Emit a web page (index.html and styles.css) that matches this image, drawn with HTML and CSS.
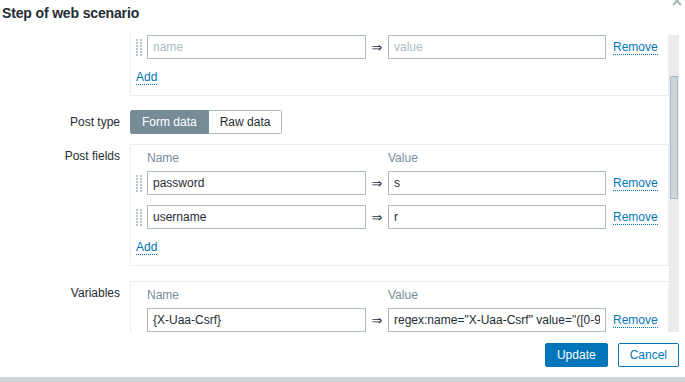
FILE: index.html
```html
<!DOCTYPE html>
<html lang="en">
<head>
  <meta charset="UTF-8">
  <meta name="viewport" content="width=device-width, initial-scale=1.0">
  <title>Step of web scenario</title>
  <link rel="stylesheet" href="styles.css">
</head>
<body>
  <div class="dialog">
    <div class="dialog-head">
      <h4 class="dialog-title">Step of web scenario</h4>
      <button class="btn-close" title="Close">
        <svg width="10" height="10" viewBox="0 0 10 10"><path d="M1 1L9 9M9 1L1 9" stroke="#a9b5bb" stroke-width="2"/></svg>
      </button>
    </div>

    <div class="dialog-body">
      <div class="form">
        <div class="form-row row-cut">
          <div class="form-label"></div>
          <div class="pairs pairs-cut">
            <div class="pair">
              <span class="drag"><svg width="6" height="17"><use href="#dots"/></svg></span>
              <input class="text" type="text" placeholder="name">
              <span class="arrow">&rArr;</span>
              <input class="text" type="text" placeholder="value">
              <span class="pair-remove"><a class="link" href="#">Remove</a></span>
            </div>
            <div class="pair-add"><a class="link" href="#">Add</a></div>
          </div>
        </div>

        <div class="form-row row-type">
          <div class="form-label label-mid">Post type</div>
          <div class="segmented">
            <button class="seg seg-on">Form data</button>
            <button class="seg">Raw data</button>
          </div>
        </div>

        <div class="form-row row-fields">
          <div class="form-label">Post fields</div>
          <div class="pairs">
            <div class="pair pair-head">
              <span></span>
              <span>Name</span>
              <span></span>
              <span>Value</span>
              <span></span>
            </div>
            <div class="pair">
              <span class="drag"><svg width="6" height="17"><use href="#dots"/></svg></span>
              <input class="text" type="text" value="password">
              <span class="arrow">&rArr;</span>
              <input class="text" type="text" value="s">
              <span class="pair-remove"><a class="link" href="#">Remove</a></span>
            </div>
            <div class="pair">
              <span class="drag"><svg width="6" height="17"><use href="#dots"/></svg></span>
              <input class="text" type="text" value="username">
              <span class="arrow">&rArr;</span>
              <input class="text" type="text" value="r">
              <span class="pair-remove"><a class="link" href="#">Remove</a></span>
            </div>
            <div class="pair-add"><a class="link" href="#">Add</a></div>
          </div>
        </div>

        <div class="form-row">
          <div class="form-label">Variables</div>
          <div class="pairs">
            <div class="pair pair-head">
              <span></span>
              <span>Name</span>
              <span></span>
              <span>Value</span>
              <span></span>
            </div>
            <div class="pair">
              <span></span>
              <input class="text" type="text" value="{X-Uaa-Csrf}">
              <span class="arrow">&rArr;</span>
              <input class="text" type="text" value="regex:name=&quot;X-Uaa-Csrf&quot; value=&quot;([0-9a-zA-Z-]+)&quot;">
              <span class="pair-remove"><a class="link" href="#">Remove</a></span>
            </div>
          </div>
        </div>
      </div>

      <div class="scrollbar"><div class="scroll-thumb"></div></div>
    </div>

    <div class="dialog-foot">
      <button class="btn btn-main">Update</button>
      <button class="btn btn-alt">Cancel</button>
    </div>
  </div>
  <div class="page-edge"></div>

  <svg width="0" height="0" class="defs">
    <defs>
      <g id="dots" fill="#b9c4ca">
        <rect x="0" y="0" width="2" height="2"/><rect x="4" y="0" width="2" height="2"/>
        <rect x="0" y="3" width="2" height="2"/><rect x="4" y="3" width="2" height="2"/>
        <rect x="0" y="6" width="2" height="2"/><rect x="4" y="6" width="2" height="2"/>
        <rect x="0" y="9" width="2" height="2"/><rect x="4" y="9" width="2" height="2"/>
        <rect x="0" y="12" width="2" height="2"/><rect x="4" y="12" width="2" height="2"/>
        <rect x="0" y="15" width="2" height="2"/><rect x="4" y="15" width="2" height="2"/>
      </g>
    </defs>
  </svg>
</body>
</html>
```

FILE: styles.css
```css
body {
  margin: 0;
  font-family: "Liberation Sans", Arial, sans-serif;
  font-size: 12px;
  color: #1f2c33;
  background-color: #fff;
}
.defs {
  position: absolute;
}
.dialog {
  height: 377px;
  display: flex;
  flex-direction: column;
}
.dialog-head {
  position: relative;
  height: 34px;
  padding-left: 2px;
}
.dialog-title {
  margin: 0;
  font-size: 14px;
  font-weight: bold;
  line-height: 26px;
  letter-spacing: -0.15px;
}
.btn-close {
  position: absolute;
  top: -4px;
  right: 3px;
  padding: 0;
  border: 0;
  background: none;
  line-height: 0;
}
.dialog-body {
  height: 299px;
  display: flex;
}
.form {
  width: 669px;
  overflow: hidden;
}
.form-row {
  display: grid;
  grid-template-columns: 130px 539px;
  margin-bottom: 15px;
}
.row-cut {
  margin-bottom: 14px;
}
.row-type {
  margin-bottom: 10px;
}
.form-label {
  padding: 5px 10px 0 0;
  text-align: right;
  line-height: 14px;
}
.label-mid {
  padding-top: 0;
  line-height: 24px;
}
.pairs {
  border: 1px solid #ebeef0;
  padding: 6px 0 11px 5px;
}
.pairs-cut {
  border-top: 0;
  padding-top: 1px;
}
.pair {
  display: grid;
  grid-template-columns: 11px 219px 22px 218px auto;
  align-items: center;
  margin-bottom: 10px;
}
.pair:last-child {
  margin-bottom: 0;
}
.pair-head {
  line-height: 14px;
  color: #768d99;
  margin-bottom: 6px;
}
.drag {
  line-height: 0;
}
.text {
  box-sizing: border-box;
  width: 100%;
  height: 24px;
  margin: 0;
  padding: 0 5px;
  border: 1px solid #acbbc2;
  font-family: "Liberation Sans", Arial, sans-serif;
  font-size: 12px;
  color: #1f2c33;
  background-color: #fff;
}
.text::placeholder {
  color: #acbbc2;
}
.arrow {
  text-align: center;
  font-family: "DejaVu Sans", sans-serif;
  font-size: 13px;
}
.pair-remove {
  padding-left: 7px;
}
.link {
  color: #0275b8;
  text-decoration: none;
  border-bottom: 1px dotted #0275b8;
}
.pair-add {
  margin-top: 11px;
  line-height: 14px;
}
.segmented {
  display: flex;
}
.seg {
  height: 24px;
  padding: 0 11px;
  margin: 0;
  border: 1px solid #acbbc2;
  background-color: #fff;
  color: #1f2c33;
  font-family: "Liberation Sans", Arial, sans-serif;
  font-size: 12px;
}
.seg-on {
  background-color: #768d99;
  border-color: #768d99;
  color: #fff;
  border-radius: 2px 0 0 2px;
}
.seg + .seg {
  border-left: 0;
  border-radius: 0 2px 2px 0;
}
.scrollbar {
  width: 10px;
  height: 297px;
  margin-top: 1px;
  background-color: #ebebeb;
}
.scroll-thumb {
  box-sizing: border-box;
  width: 8px;
  height: 123px;
  margin: 41px 0 0 1px;
  background-color: #ccd5d9;
  border: 1px solid #acbbc2;
}
.dialog-foot {
  flex: 1;
  display: flex;
  justify-content: flex-end;
  align-items: flex-start;
  gap: 10px;
  padding: 10px 6px 0 0;
}
.btn {
  height: 24px;
  padding: 0 11px;
  border: 1px solid #0275b8;
  border-radius: 2px;
  font-family: "Liberation Sans", Arial, sans-serif;
  font-size: 12px;
}
.btn-main {
  background-color: #0275b8;
  color: #fff;
}
.btn-alt {
  background-color: #fff;
  color: #0275b8;
}
.page-edge {
  height: 5px;
  background-color: #cfd6d9;
}
```
